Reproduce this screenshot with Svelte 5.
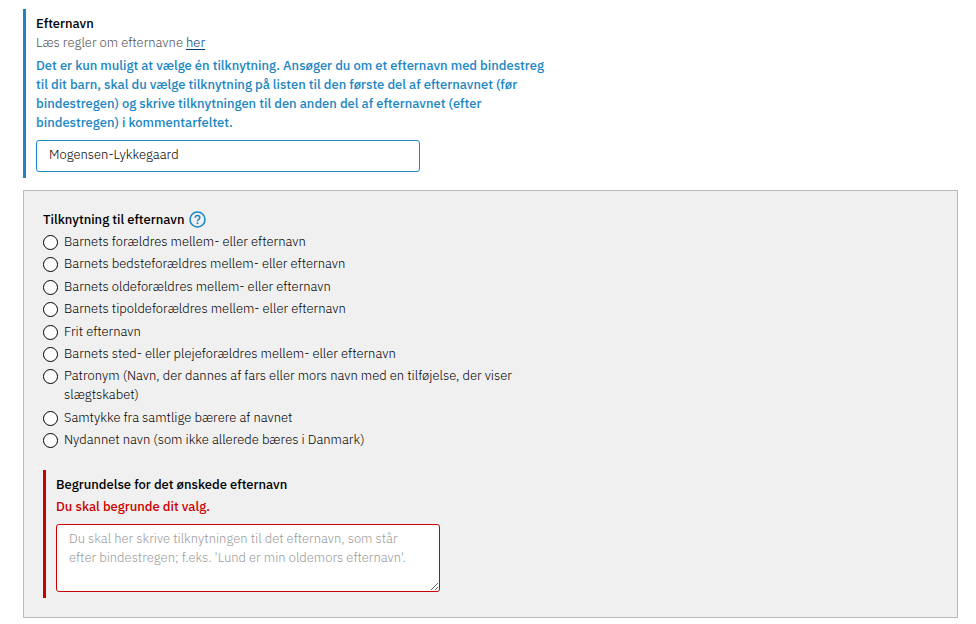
<script lang="ts">
	const relations: string[] = [
		'Barnets forældres mellem- eller efternavn',
		'Barnets bedsteforældres mellem- eller efternavn',
		'Barnets oldeforældres mellem- eller efternavn',
		'Barnets tipoldeforældres mellem- eller efternavn',
		'Frit efternavn',
		'Barnets sted- eller plejeforældres mellem- eller efternavn',
		'Patronym (Navn, der dannes af fars eller mors navn med en tilføjelse, der viser slægtskabet)',
		'Samtykke fra samtlige bærere af navnet',
		'Nydannet navn (som ikke allerede bæres i Danmark)'
	];

	let surname = $state('Mogensen-Lykkegaard');
	let relation = $state('');
	let reason = $state('');
</script>

<main>
	<section class="field info">
		<label class="title" for="surname">Efternavn</label>
		<p class="hint">Læs regler om efternavne <a href="#regler">her</a></p>
		<p class="message" id="surname-info">
			Det er kun muligt at vælge én tilknytning. Ansøger du om et efternavn med bindestreg til dit
			barn, skal du vælge tilknytning på listen til den første del af efternavnet (før
			bindestregen) og skrive tilknytningen til den anden del af efternavnet (efter bindestregen) i
			kommentarfeltet.
		</p>
		<input
			class="control"
			id="surname"
			type="text"
			aria-describedby="surname-info"
			spellcheck="false"
			bind:value={surname}
		/>
	</section>

	<section class="panel">
		<div class="heading">
			<span class="title" id="relation-title">Tilknytning til efternavn</span>
			<button type="button" class="help" aria-label="Hjælp til tilknytning">
				<svg viewBox="0 0 17 17" width="17" height="17" fill="none" stroke="currentColor">
					<circle cx="8.5" cy="8.5" r="7.5" stroke-width="1.6" />
					<path
						d="M6.2 6.7C6.2 5.3 7.2 4.5 8.5 4.5s2.3.8 2.3 2.1c0 1-.6 1.5-1.3 2-.7.4-1 .8-1 1.6"
						stroke-width="1.5"
					/>
					<circle cx="8.5" cy="12.2" r="1" fill="currentColor" stroke="none" />
				</svg>
			</button>
		</div>

		<div class="options" role="radiogroup" aria-labelledby="relation-title">
			{#each relations as text}
				<label class="option">
					<input type="radio" name="relation" value={text} bind:group={relation} />
					<span>{text}</span>
				</label>
			{/each}
		</div>

		<div class="field error">
			<label class="title" for="reason">Begrundelse for det ønskede efternavn</label>
			<p class="message" id="reason-error">Du skal begrunde dit valg.</p>
			<textarea
				class="control"
				id="reason"
				aria-invalid="true"
				aria-describedby="reason-error"
				spellcheck="false"
				placeholder="Du skal her skrive tilknytningen til det efternavn, som står efter bindestregen; f.eks. 'Lund er min oldemors efternavn'."
				bind:value={reason}
			></textarea>
		</div>
	</section>
</main>

<style>
	:global(body) {
		margin: 0;
		background: #fff;
	}

	main {
		display: flex;
		flex-direction: column;
		gap: 12px;
		padding: 9px 18px 6px 23px;
		color: #000;
		font-family: 'IBM Plex Sans', Roboto, sans-serif;
		font-size: 13px;
		font-weight: 300;
		line-height: 19px;
	}

	p {
		margin: 0;
	}

	.title,
	.message {
		font-weight: 500;
	}

	.field {
		display: flex;
		flex-direction: column;
		align-items: flex-start;
		padding: 5px 0 6px 10px;
		border-left: 3px solid;
	}

	.info {
		border-color: #1b86c3;
	}

	.error {
		border-color: #c00;
	}

	.hint {
		color: #505050;
	}

	.hint a {
		color: #003a75;
		text-underline-offset: 2px;
	}

	.message {
		max-width: 512px;
		margin-top: 4px;
	}

	.info .message {
		color: #1b86c3;
	}

	.error .message {
		margin-top: 3px;
		color: #c00;
	}

	.control {
		box-sizing: border-box;
		width: 384px;
		max-width: 100%;
		margin: 8px 0 0;
		padding: 4px 12px;
		border: 1px solid;
		border-radius: 3px;
		background: #fff;
		color: #000;
		font: inherit;
	}

	input.control {
		height: 32px;
		padding-bottom: 8px;
		border-color: #1b86c3;
	}

	textarea.control {
		height: 68px;
		border-color: #c00;
		resize: both;
	}

	.control::placeholder {
		color: #999;
		opacity: 1;
	}

	.panel {
		padding: 19px;
		border: 1px solid #bababa;
		background: #f0f0f0;
	}

	.heading {
		display: flex;
		align-items: center;
		gap: 5px;
	}

	.help {
		display: flex;
		padding: 0;
		border: 0;
		background: none;
		color: #1b86c3;
		cursor: pointer;
	}

	.options {
		display: flex;
		flex-direction: column;
		align-items: flex-start;
		justify-content: space-between;
		max-width: 480px;
		min-height: 217px;
		margin: 3px 0 21px;
	}

	.option {
		display: flex;
		align-items: flex-start;
		gap: 6px;
	}

	.option input {
		flex: none;
		width: 15px;
		height: 15px;
		margin: 3px 0 0;
		border: 1px solid #000;
		border-radius: 50%;
		background: #fff;
		appearance: none;
	}

	.option input:checked {
		border-width: 5px;
	}
</style>
